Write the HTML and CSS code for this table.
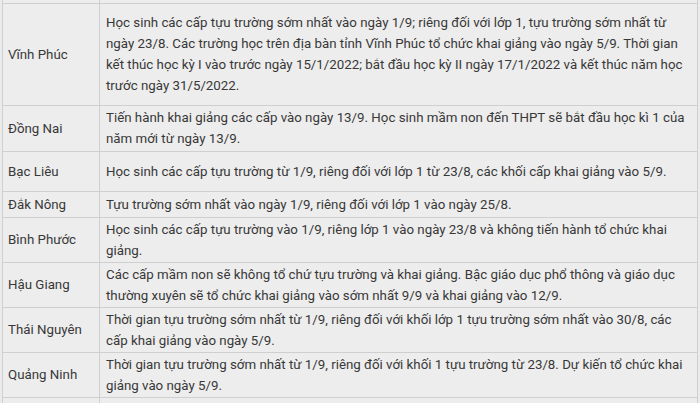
FILE: index.html
```html
<!DOCTYPE html>
<html lang="vi">
<head>
<meta charset="utf-8">
<link rel="stylesheet" href="styles.css">
</head>
<body>
<table class="schedule">
  <tbody>
    <tr class="r-prev"><td class="prov"></td><td class="desc"></td></tr>
    <tr class="r-vp"><td class="prov">Vĩnh Phúc</td><td class="desc">Học sinh các cấp tựu trường sớm nhất vào ngày 1/9; riêng đối với lớp 1, tựu trường sớm nhất từ<br>ngày 23/8. Các trường học trên địa bàn tỉnh Vĩnh Phúc tổ chức khai giảng vào ngày 5/9. Thời gian<br>kết thúc học kỳ I vào trước ngày 15/1/2022; bắt đầu học kỳ II ngày 17/1/2022 và kết thúc năm học<br>trước ngày 31/5/2022.</td></tr>
    <tr class="r-dn"><td class="prov">Đồng Nai</td><td class="desc">Tiến hành khai giảng các cấp vào ngày 13/9. Học sinh mầm non đến THPT sẽ bắt đầu học kì 1 của<br>năm mới từ ngày 13/9.</td></tr>
    <tr class="r-bl"><td class="prov">Bạc Liêu</td><td class="desc">Học sinh các cấp tựu trường từ 1/9, riêng đối với lớp 1 từ 23/8, các khối cấp khai giảng vào 5/9.</td></tr>
    <tr class="r-dk"><td class="prov">Đắk Nông</td><td class="desc">Tựu trường sớm nhất vào ngày 1/9, riêng đối với lớp 1 vào ngày 25/8.</td></tr>
    <tr class="r-two"><td class="prov">Bình Phước</td><td class="desc">Học sinh các cấp tựu trường vào 1/9, riêng lớp 1 vào ngày 23/8 và không tiến hành tổ chức khai<br>giảng.</td></tr>
    <tr class="r-two"><td class="prov">Hậu Giang</td><td class="desc">Các cấp mầm non sẽ không tổ chứ tựu trường và khai giảng. Bậc giáo dục phổ thông và giáo dục<br>thường xuyên sẽ tổ chức khai giảng vào sớm nhất 9/9 và khai giảng vào 12/9.</td></tr>
    <tr class="r-two"><td class="prov">Thái Nguyên</td><td class="desc">Thời gian tựu trường sớm nhất từ 1/9, riêng đối với khối lớp 1 tựu trường sớm nhất vào 30/8, các<br>cấp khai giảng vào ngày 5/9.</td></tr>
    <tr class="r-two"><td class="prov">Quảng Ninh</td><td class="desc">Thời gian tựu trường sớm nhất từ 1/9, riêng đối với khối 1 tựu trường từ 23/8. Dự kiến tổ chức khai<br>giảng vào ngày 5/9.</td></tr>
    <tr class="r-next"><td class="prov"></td><td class="desc"></td></tr>
  </tbody>
</table>
</body>
</html>
```

FILE: styles.css
```css
html, body {
  margin: 0;
  padding: 0;
  background: #ebebeb;
  overflow: hidden;
}
.schedule {
  margin-left: 2px;
  width: 696px;
  border-collapse: collapse;
  table-layout: fixed;
  background: #ededed;
  font-family: Roboto, "Noto Sans", sans-serif;
  font-size: 13.3px;
  line-height: 21px;
  color: #383838;
}
.schedule td {
  border: 1px solid #cfcfcf;
  vertical-align: middle;
  padding: 0 4px 0 5px;
  box-sizing: border-box;
}
.schedule td.prov {
  width: 97px;
}
.schedule td.desc {
  padding-left: 6px;
  padding-right: 2px;
  white-space: nowrap;
}
.r-prev td { height: 3px; border-top: none; }
.r-vp td { height: 102px; }
.r-dn td { height: 46px; }
.r-bl td { height: 40px; }
.r-dk td { height: 26px; }
.r-two td { height: 45px; }
.r-next td { height: 20px; }
```
